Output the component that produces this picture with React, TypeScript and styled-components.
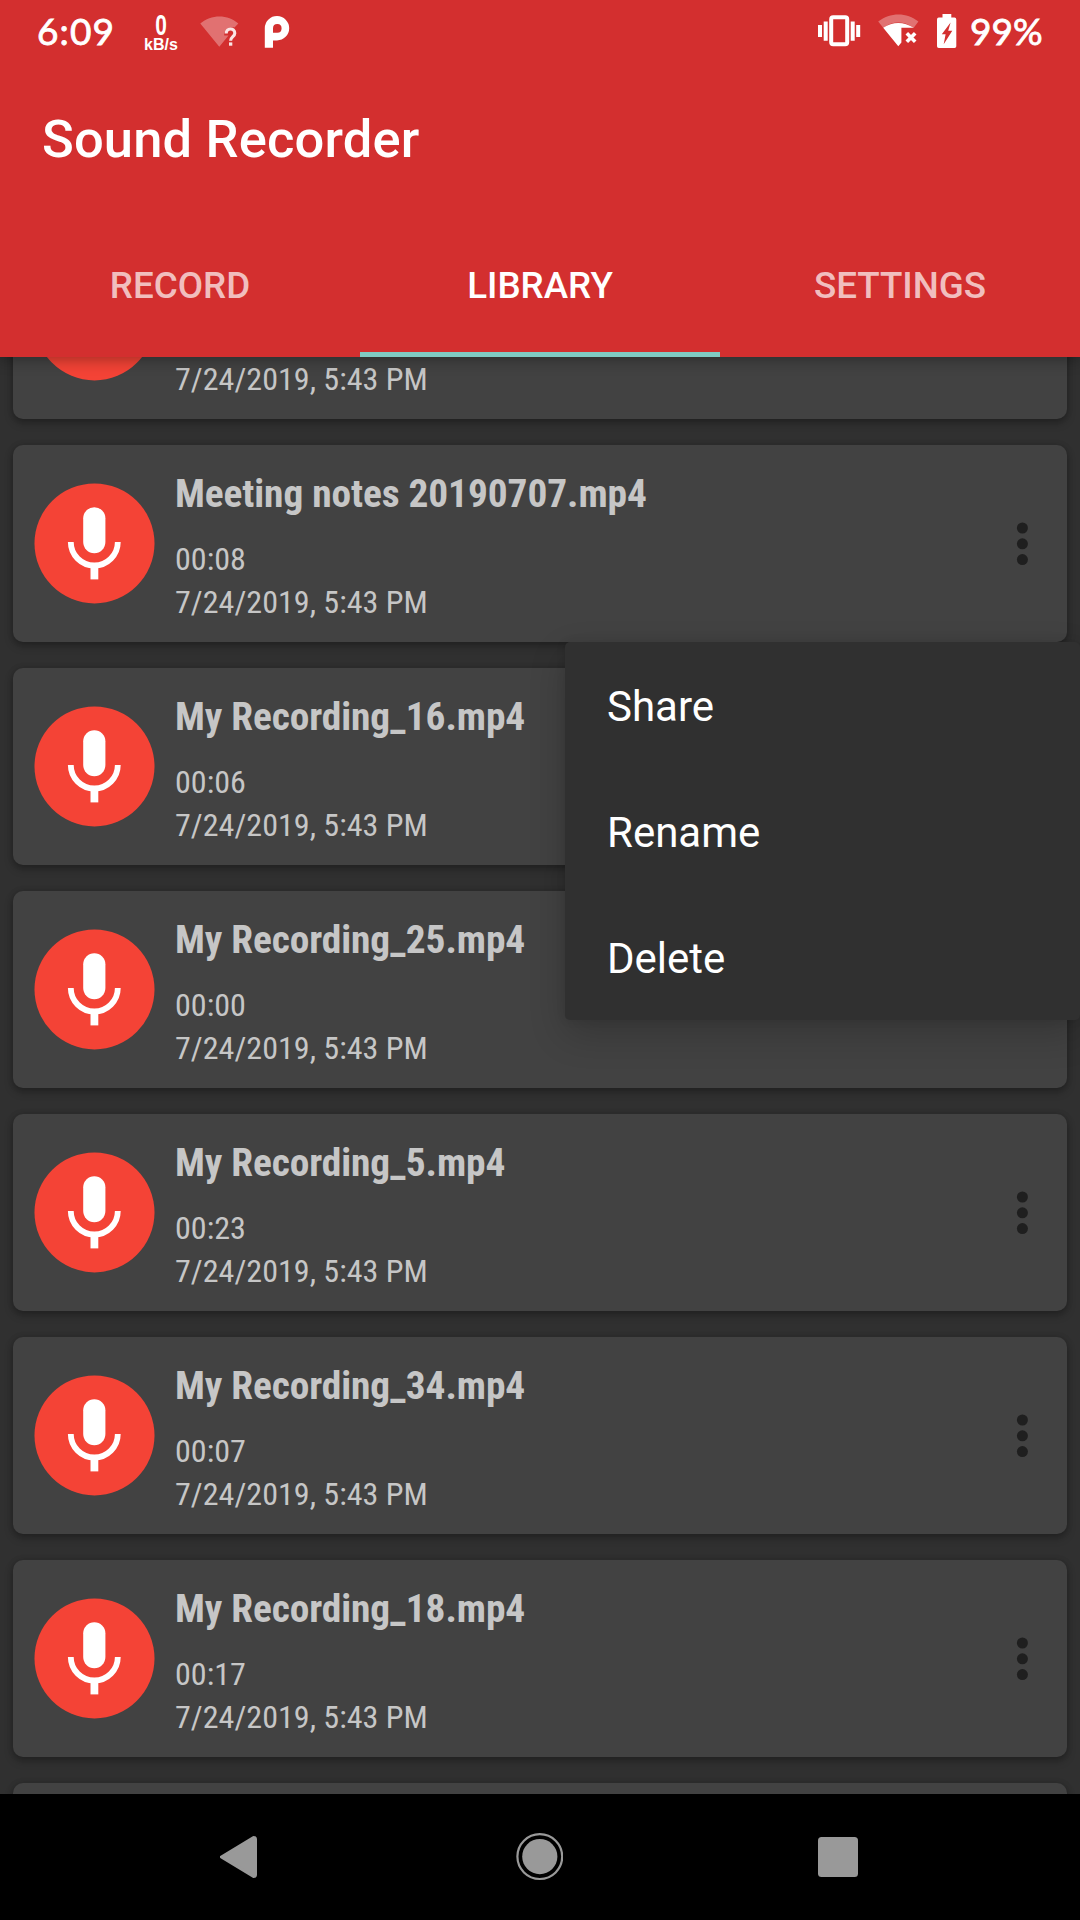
import React from "react";
import styled, { createGlobalStyle } from "styled-components";

const GlobalStyle = createGlobalStyle`
  *, *::before, *::after { box-sizing: border-box; }
  html, body { margin: 0; padding: 0; background: #303030; }
  body { font-family: Roboto, "Noto Sans", sans-serif; }
  button { border: 0; padding: 0; background: none; font: inherit; color: inherit; }
`;

const Screen = styled.div`
  position: relative;
  width: 1080px;
  height: 1920px;
  display: flex;
  flex-direction: column;
  overflow: hidden;
  background: #303030;
`;

const AppBar = styled.header`
  position: relative;
  z-index: 2;
  flex: 0 0 357px;
  display: flex;
  flex-direction: column;
  background: #d32f2f;
  color: #fff;
  box-shadow: 0 3px 14px rgba(0, 0, 0, 0.32);
`;

const StatusBar = styled.div`
  flex: 0 0 66px;
  display: flex;
  align-items: flex-start;
  justify-content: space-between;
  padding: 0 37px;
`;

const StatusGroup = styled.div`
  display: flex;
  align-items: flex-start;
  height: 66px;
  svg { display: block; flex: none; }
`;

const StatusText = styled.span<{ $width: number; $spacing: number; $gap?: number }>`
  width: ${(p) => p.$width}px;
  margin-left: ${(p) => p.$gap ?? 0}px;
  padding-top: 8px;
  font: 400 37px/45px Lato, sans-serif;
  -webkit-text-stroke: 0.8px #fff;
  letter-spacing: ${(p) => p.$spacing}px;
  white-space: nowrap;
`;

const NetSpeed = styled.div`
  display: flex;
  flex-direction: column;
  align-items: center;
  width: 34px;
  margin-left: 30px;
  padding-top: 11px;
  font-family: "Liberation Sans", sans-serif;
  font-weight: 700;
`;

const SpeedValue = styled.span`
  font-size: 29px;
  line-height: 28px;
  transform: scaleX(0.72);
`;

const SpeedUnit = styled.span`
  font-size: 16px;
  line-height: 12px;
`;

const Toolbar = styled.div`
  flex: 0 0 145px;
  display: flex;
  align-items: center;
  padding-left: 42px;
`;

const Title = styled.h1`
  margin: 0;
  font-size: 52.5px;
  font-weight: 500;
  line-height: 62px;
  letter-spacing: 0.15px;
`;

const Tabs = styled.nav`
  flex: 1;
  display: grid;
  grid-template-columns: repeat(3, 1fr);
`;

const Tab = styled.button<{ $active?: boolean }>`
  font-size: 36.75px;
  font-weight: 500;
  line-height: 44px;
  padding-top: ${(p) => (p.$active ? 9 : 4)}px;
  color: ${(p) => (p.$active ? "#fff" : "rgba(255,255,255,0.7)")};
  border-bottom: ${(p) => (p.$active ? "5px solid #80cbc4" : "0")};
`;

const Library = styled.main`
  flex: 1;
  min-height: 0;
  overflow: hidden;
  display: flex;
  flex-direction: column;
  gap: 26px;
  padding: 0 13px;
`;

const Card = styled.article<{ $scrolled?: boolean }>`
  flex: 0 0 197px;
  display: flex;
  align-items: center;
  margin-top: ${(p) => (p.$scrolled ? -135 : 0)}px;
  border-radius: 10px;
  background: #424242;
  color: #c6c6c6;
  box-shadow: 0 4px 9px rgba(0, 0, 0, 0.28), 0 0 6px rgba(0, 0, 0, 0.14);
`;

const MicBadge = styled.svg`
  flex: none;
  display: block;
  margin: 0 0 1px 21px;
`;

const Details = styled.div`
  flex: 1;
  align-self: stretch;
  padding: 25px 0 0 20px;
  font-family: "Roboto Condensed", Roboto, sans-serif;
  font-stretch: 75%;
  white-space: nowrap;
`;

const FileName = styled.div`
  font-size: 39.4px;
  font-weight: 700;
  line-height: 48px;
  letter-spacing: -0.09px;
`;

const Meta = styled.div<{ $first?: boolean }>`
  margin-top: ${(p) => (p.$first ? 20 : 0)}px;
  font-size: 32.1px;
  line-height: 43px;
`;

const MoreButton = styled.button`
  width: 90px;
  height: 121px;
  display: grid;
  place-items: center;
`;

const Menu = styled.div`
  position: absolute;
  z-index: 3;
  top: 642px;
  right: 0;
  width: 515px;
  display: flex;
  flex-direction: column;
  border-radius: 5px;
  background: #303030;
  color: #fff;
  box-shadow: 0 14px 36px rgba(0, 0, 0, 0.2), 0 0 10px rgba(0, 0, 0, 0.1);
`;

const MenuItem = styled.button`
  height: 126px;
  padding: 4px 42px 0;
  text-align: left;
  font-size: 42px;
  line-height: 50px;
`;

const NavBar = styled.footer`
  position: relative;
  z-index: 2;
  flex: 0 0 126px;
  display: flex;
  align-items: center;
  justify-content: space-between;
  padding: 0 206px 0 203px;
  background: #000;
`;

const NavButton = styled.button`
  width: 72px;
  height: 72px;
  display: grid;
  place-items: center;
  svg { display: block; }
`;

const MicIcon = () => (
  <MicBadge width="121" height="121" viewBox="0 0 121 121">
    <circle cx="60.5" cy="60.4" r="60" fill="#f44336" />
    <rect x="49.2" y="24.2" width="22.2" height="46" rx="11.1" fill="#fff" />
    <path d="M36.8 59A23.5 23.5 0 0 0 83.8 59" fill="none" stroke="#fff" strokeWidth="5.8" />
    <path d="M56.5 82h7.8v14.4h-7.8z" fill="#fff" />
  </MicBadge>
);

const MoreIcon = () => (
  <svg width="12" height="44" viewBox="0 0 12 44">
    {[6, 21.8, 37.6].map((cy) => (
      <circle key={cy} cx="6.4" cy={cy} r="5.5" fill="#1f1f1f" />
    ))}
  </svg>
);

const IconSlot = styled.svg<{ $gap?: number }>`
  margin-left: ${(p) => p.$gap ?? 0}px;
`;

const WifiUnknown = () => (
  <IconSlot width="40" height="60" viewBox="0 0 40 60" $gap={22}>
    <path d="M.3 23.5C11 14 28 14 38.3 23.5L34.5 27.5C29 26 24 30 24.2 35.5H28.5L19.3 46.8Z" fill="#fff" fillOpacity=".32" />
    <path d="M26.2 33.5C26.2 27.5 34.8 27.5 34.8 33.2C34.8 36.5 30.6 37 30.6 40.8" fill="none" stroke="#fff" strokeOpacity=".88" strokeWidth="3.1" />
    <rect x="29" y="42.4" width="3.3" height="3.3" fill="#fff" fillOpacity=".88" />
  </IconSlot>
);

const ParkingBadge = () => (
  <IconSlot width="26" height="60" viewBox="0 0 26 60" $gap={24}>
    <path d="M.8 47.8V28A12.2 12.2 0 1 1 13 40.4H9V47.8Z" fill="#fff" />
    <path d="M9 32.7V28.2A4.3 4.3 0 1 1 13.3 32.7Z" fill="#d32f2f" />
  </IconSlot>
);

const Vibrate = () => (
  <IconSlot width="44" height="60" viewBox="0 0 44 60">
    <path d="M1 25h4v12H1zM6.7 21.5h4v19.2h-4zM33.7 21.5h4v19.2h-4zM39.2 25h4v12h-4z" fill="#fff" />
    <rect x="14.2" y="17.2" width="16" height="27" rx="2" fill="none" stroke="#fff" strokeWidth="4" />
  </IconSlot>
);

const WifiOff = () => (
  <IconSlot width="42" height="60" viewBox="0 0 42 60" $gap={17}>
    <path d="M.2 21.5C12 12 29 12 40.4 21.5L35.5 28C26 20.8 14.5 20.8 5.4 28Z" fill="#fff" fillOpacity=".32" />
    <path d="M5.2 27.8C14.5 21.3 26 21.3 35.6 27.8H23.4V42.5L20.3 46.3Z" fill="#fff" />
    <path d="M28.8 33.2L37.2 41.8M37.2 33.2L28.8 41.8" stroke="#fff" strokeWidth="3.6" />
  </IconSlot>
);

const Battery = () => (
  <IconSlot width="20" height="60" viewBox="0 0 20 60" $gap={17}>
    <path d="M5.5 14h8.8v3.6h3.2a1.8 1.8 0 0 1 1.8 1.8v26.8a1.8 1.8 0 0 1-1.8 1.8H1.800A1.8 1.8 0 0 1 0 46.2V19.4a1.8 1.8 0 0 1 1.8-1.8H5.5Z" fill="#fff" />
    <path d="M13.6 22.4L4.8 34.3H8.6L6.7 44.3L15.3 30.8H11.2Z" fill="#d32f2f" />
  </IconSlot>
);

const recordings = [
  { name: "\u00a0", length: "\u00a0" },
  { name: "Meeting notes 20190707.mp4", length: "00:08" },
  { name: "My Recording_16.mp4", length: "00:06" },
  { name: "My Recording_25.mp4", length: "00:00" },
  { name: "My Recording_5.mp4", length: "00:23" },
  { name: "My Recording_34.mp4", length: "00:07" },
  { name: "My Recording_18.mp4", length: "00:17" },
];

export default function App() {
  return (
    <Screen>
      <GlobalStyle />
      <AppBar>
        <StatusBar>
          <StatusGroup>
            <StatusText $width={77} $spacing={1.1}>6:09</StatusText>
            <NetSpeed>
              <SpeedValue>0</SpeedValue>
              <SpeedUnit>kB/s</SpeedUnit>
            </NetSpeed>
            <WifiUnknown />
            <ParkingBadge />
          </StatusGroup>
          <StatusGroup>
            <Vibrate />
            <WifiOff />
            <Battery />
            <StatusText $width={73} $spacing={0} $gap={13}>99%</StatusText>
          </StatusGroup>
        </StatusBar>
        <Toolbar>
          <Title>Sound Recorder</Title>
        </Toolbar>
        <Tabs>
          <Tab>RECORD</Tab>
          <Tab $active>LIBRARY</Tab>
          <Tab>SETTINGS</Tab>
        </Tabs>
      </AppBar>

      <Library>
        {recordings.map((item, index) => (
          <Card key={item.name} $scrolled={index === 0}>
            <MicIcon />
            <Details>
              <FileName>{item.name}</FileName>
              <Meta $first>{item.length}</Meta>
              <Meta>7/24/2019, 5:43 PM</Meta>
            </Details>
            <MoreButton aria-label="More options">
              <MoreIcon />
            </MoreButton>
          </Card>
        ))}
        <Card />
      </Library>

      <Menu>
        <MenuItem>Share</MenuItem>
        <MenuItem>Rename</MenuItem>
        <MenuItem>Delete</MenuItem>
      </Menu>

      <NavBar>
        <NavButton aria-label="Back">
          <svg width="38" height="44" viewBox="0 0 38 44">
            <path d="M33.6 2.5L1.4 22L33.6 41.5Q35.5 41.5 35.5 39.5V4.5Q35.5 2.5 33.6 2.5Z" fill="#999" stroke="#999" strokeWidth="3" strokeLinejoin="round" />
          </svg>
        </NavButton>
        <NavButton aria-label="Home">
          <svg width="48" height="48" viewBox="0 0 48 48">
            <circle cx="24.8" cy="23.6" r="22.4" fill="none" stroke="#999" strokeWidth="2.2" />
            <circle cx="24.8" cy="23.6" r="17.6" fill="#999" />
          </svg>
        </NavButton>
        <NavButton aria-label="Recents">
          <svg width="40" height="40" viewBox="0 0 40 40">
            <rect width="40" height="40" rx="3.5" fill="#999" />
          </svg>
        </NavButton>
      </NavBar>
    </Screen>
  );
}
